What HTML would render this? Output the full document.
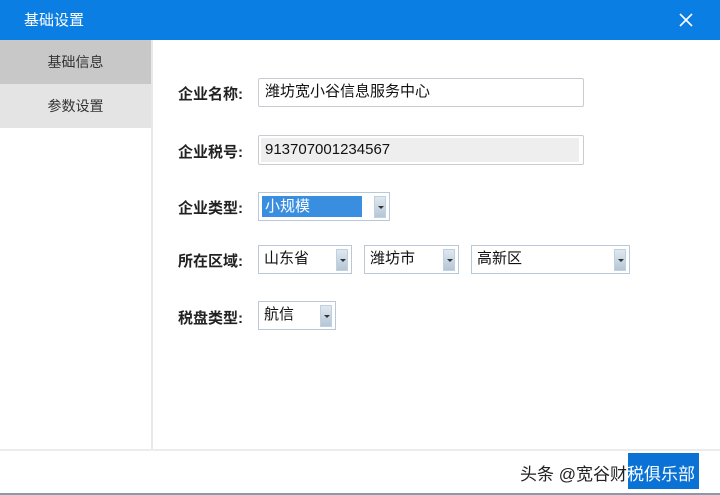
<!DOCTYPE html>
<html><head><meta charset="utf-8"><style>
*{margin:0;padding:0;box-sizing:border-box}
body{width:720px;height:495px;background:#fff;position:relative;overflow:hidden;font-family:"Liberation Sans","Noto Sans CJK SC",sans-serif}
.title{position:absolute;left:0;top:0;width:720px;height:40px;background:#0b7ee3;color:#fff;font-size:15px;line-height:42px;padding-left:24px}
.x{position:absolute;right:26px;top:12px;width:16px;height:16px}
.side{position:absolute;left:0;top:40px;width:153px;height:410px;border-right:2px solid #e8e8e8}
.it{height:44px;line-height:44px;text-align:center;font-size:14px;color:#333}
.l{position:absolute;left:178px;font-size:15px;font-weight:bold;color:#222}
.in{position:absolute;border:1px solid #c8ccd2;background:#fff;font-size:15px;color:#111;line-height:26px;padding-left:6px;border-radius:2px}
.sel{position:absolute;border:1px solid #b8c8d8;background:#fff;font-size:15px;color:#111;line-height:26px;padding-left:5px}
.sel b{position:absolute;right:3px;top:3px;width:12px;height:22px;background:linear-gradient(#dfe8f0,#b5c6d6);border:1px solid #c0d0de}
.sel b:after{content:"";position:absolute;left:3px;top:9px;border-left:3px solid transparent;border-right:3px solid transparent;border-top:3px solid #333}
</style></head><body>
<div class="title">基础设置
<svg class="x" viewBox="0 0 16 16"><path d="M2 2L14 14M14 2L2 14" stroke="#fff" stroke-width="1.6"/></svg></div>
<div class="side">
<div class="it" style="background:#c8c8c8">基础信息</div>
<div class="it" style="background:#e4e4e4">参数设置</div>
</div>
<div style="position:absolute;left:0;top:449px;width:720px;height:2px;background:#ececec"></div>
<div style="position:absolute;left:0;top:493px;width:720px;height:2px;background:#8a98ac"></div>

<div class="l" style="top:83px">企业名称:</div>
<div class="in" style="left:258px;top:78px;width:326px;height:29px">潍坊宽小谷信息服务中心</div>
<div class="l" style="top:141px">企业税号:</div>
<div class="in" style="left:258px;top:135px;width:326px;height:30px;padding:2px"><div style="background:#eee;height:24px;line-height:24px;padding-left:4px;width:318px">913707001234567</div></div>
<div class="l" style="top:197px">企业类型:</div>
<div class="sel" style="left:258px;top:192px;width:132px;height:29px;padding:3px"><div style="background:#3a8ee0;color:#fff;width:100px;height:21px;line-height:21px;padding-left:3px">小规模</div><b></b></div>
<div class="l" style="top:250px">所在区域:</div>
<div class="sel" style="left:258px;top:245px;width:94px;height:29px">山东省<b></b></div>
<div class="sel" style="left:364px;top:245px;width:95px;height:29px">潍坊市<b></b></div>
<div class="sel" style="left:471px;top:245px;width:159px;height:29px">高新区<b></b></div>
<div class="l" style="top:307px">税盘类型:</div>
<div class="sel" style="left:258px;top:301px;width:78px;height:29px">航信<b></b></div>

<div style="position:absolute;left:628px;top:453px;width:71px;height:36px;background:#0a72d4"></div>
<div style="position:absolute;left:520px;top:460px;font-size:17px;color:#222;white-space:nowrap;text-shadow:0 0 2px #fff">头条 @宽谷财<span style="color:#fff;text-shadow:none">税俱乐部</span></div>
</body></html>
